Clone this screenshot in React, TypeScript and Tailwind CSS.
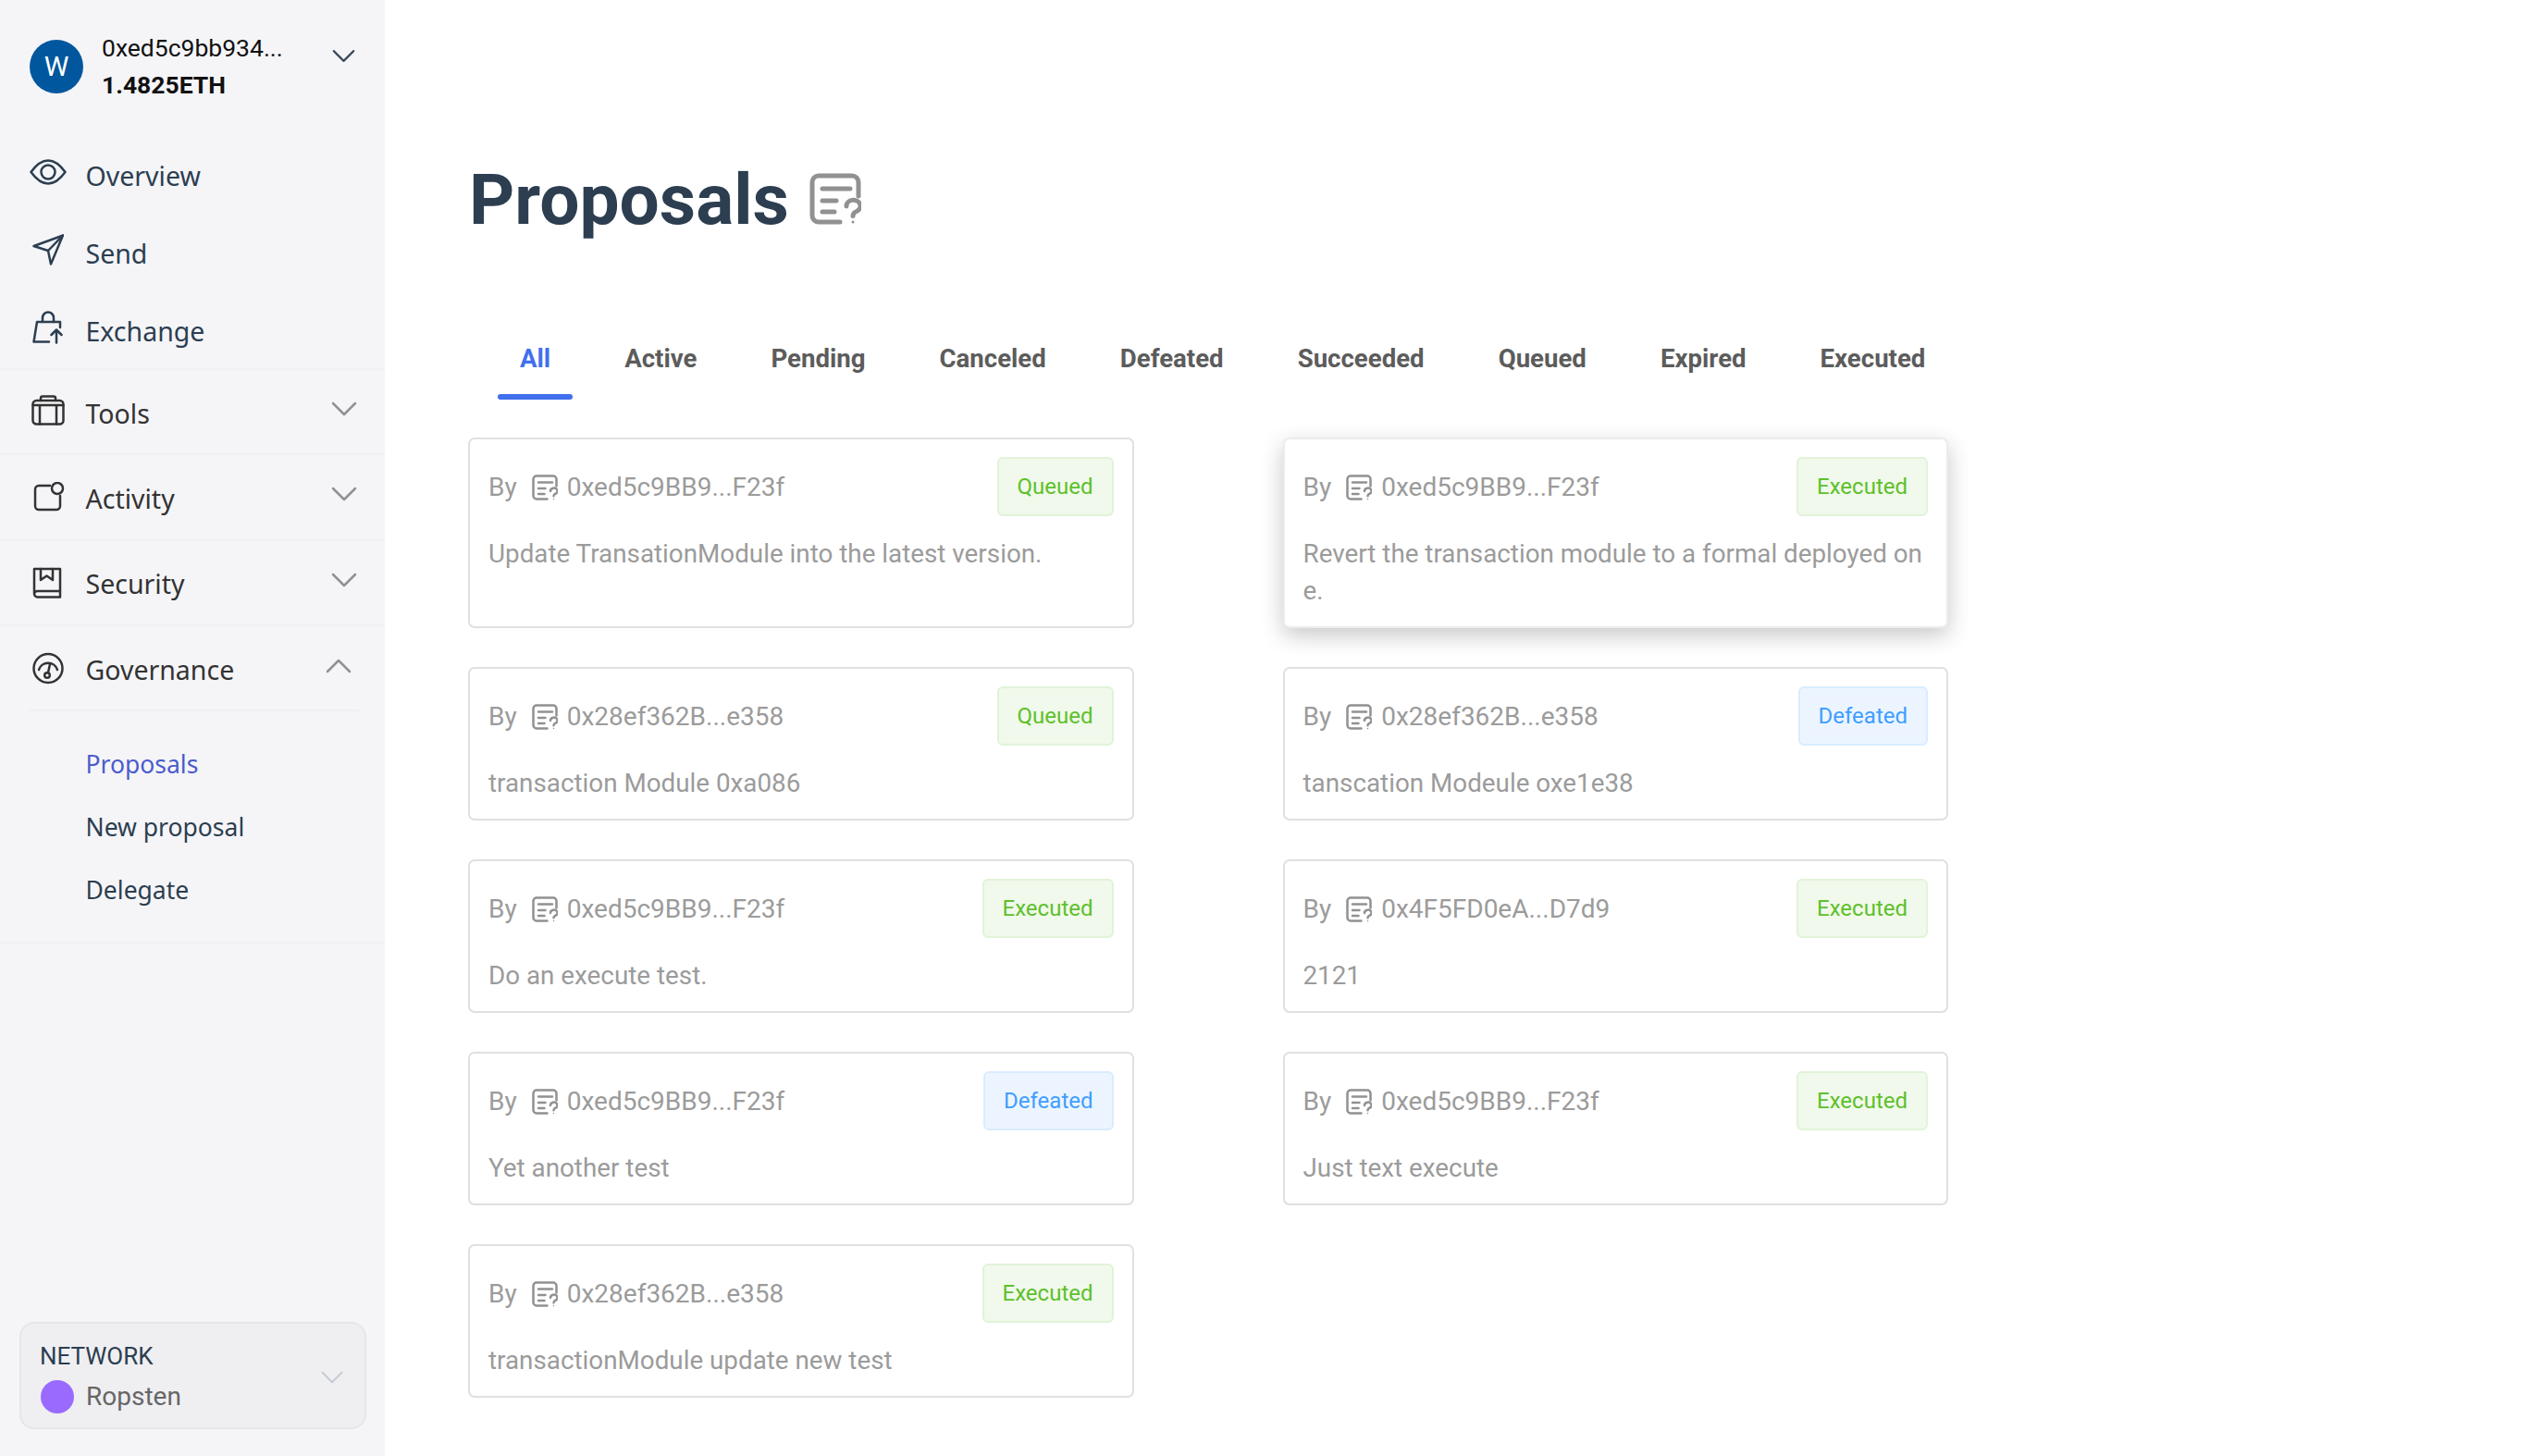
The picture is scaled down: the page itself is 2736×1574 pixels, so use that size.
import React from 'react';
import { ChevronDown, ChevronUp } from 'lucide-react';

const stroke = {
  fill: 'none',
  stroke: 'currentColor',
  strokeWidth: 2.5,
  strokeLinecap: 'round' as const,
  strokeLinejoin: 'round' as const,
};

const EyeIcon = () => (
  <svg width="40" height="28" viewBox="0 0 40 28" {...stroke}>
    <path d="M1.5 14C8 5 14 1.5 20 1.5S32 5 38.5 14C32 23 26 26.5 20 26.5S8 23 1.5 14Z" />
    <circle cx="20" cy="14" r="7.5" />
  </svg>
);

const SendIcon = () => (
  <svg className="ml-[3px]" width="34" height="34" viewBox="0 0 34 34" {...stroke}>
    <path d="M33 1.5L1.5 13L17 18L20 32.5Z" />
    <path d="M33 1.5L17 18" />
  </svg>
);

const BagIcon = () => (
  <svg className="ml-[3px]" width="33" height="36" viewBox="0 0 33 36" {...stroke}>
    <path d="M11 12V7.5a6 6 0 0 1 12 0V12" />
    <path d="M18 33.5H1.5L5 12H30V18" />
    <path d="M26 34.5V21M20.5 26L26 20.5L31.5 26" />
  </svg>
);

const ToolsIcon = () => (
  <svg className="-translate-y-[2px]" width="36" height="33" viewBox="0 0 36 33" {...stroke}>
    <rect x="1.5" y="6" width="33" height="25.5" rx="4" />
    <path d="M10 6V3.500a2 2 0 0 1 2-2H24a2 2 0 0 1 2 2V6" />
    <path d="M9 11V31.500M27 11V31.500M1.500 11H34.500" />
  </svg>
);

const ActivityIcon = () => (
  <svg className="ml-[2px]" width="34" height="32" viewBox="0 0 34 32" {...stroke}>
    <path d="M18 4H6a4 4 0 0 0-4 4V26a4 4 0 0 0 4 4H25a4 4 0 0 0 4-4V15" />
    <circle cx="26" cy="7" r="6" />
  </svg>
);

const BookIcon = () => (
  <svg className="ml-[1px]" width="32" height="34" viewBox="0 0 32 34" {...stroke}>
    <path d="M2 29V2H30V32.500H5.500A3.500 3.500 0 0 1 2 29A3.500 3.500 0 0 1 5.500 26H30" />
    <path d="M9 2V14L15.500 9.500L22 14V2" />
  </svg>
);

const GaugeIcon = () => (
  <svg width="36" height="35" viewBox="0 0 36 35" {...stroke}>
    <circle cx="18" cy="17.500" r="15.500" />
    <path d="M8 19A10.500 10.500 0 0 1 28 19" />
    <circle cx="17" cy="25" r="2.800" />
    <path d="M18 22L20 13" />
  </svg>
);

const DocIcon = ({ size }: { size: number }) => (
  <svg width={size} height={size} viewBox="0 0 56 56" fill="none" stroke="#919191" strokeWidth="5" strokeLinecap="round" strokeLinejoin="round">
    <path d="M33 53H10a7 7 0 0 1-7-7V10a7 7 0 0 1 7-7H46a7 7 0 0 1 7 7V25" />
    <path d="M14 17H44M14 30H29M14 42H27" />
    <path d="M40 36a7.500 6.500 0 1 1 11 5.500q-4 1.500-4 5" />
    <circle cx="47" cy="53" r="1.500" fill="#919191" stroke="none" />
  </svg>
);

const tabs = ['All', 'Active', 'Pending', 'Canceled', 'Defeated', 'Succeeded', 'Queued', 'Expired', 'Executed'];

const proposals = [
  { by: '0xed5c9BB9...F23f', status: 'Queued', text: 'Update TransationModule into the latest version.' },
  { by: '0xed5c9BB9...F23f', status: 'Executed', text: 'Revert the transaction module to a formal deployed one.', hovered: true },
  { by: '0x28ef362B...e358', status: 'Queued', text: 'transaction Module 0xa086' },
  { by: '0x28ef362B...e358', status: 'Defeated', text: 'tanscation Modeule oxe1e38' },
  { by: '0xed5c9BB9...F23f', status: 'Executed', text: 'Do an execute test.' },
  { by: '0x4F5FD0eA...D7d9', status: 'Executed', text: '2121' },
  { by: '0xed5c9BB9...F23f', status: 'Defeated', text: 'Yet another test' },
  { by: '0xed5c9BB9...F23f', status: 'Executed', text: 'Just text execute' },
  { by: '0x28ef362B...e358', status: 'Executed', text: 'transactionModule update new test' },
];

const NavRow = ({ icon, label }: { icon: React.ReactNode; label: string }) => (
  <div className="flex h-[84px] items-center pl-[32px] text-[#2c3e50]">
    <span className="flex w-[60.500px] -translate-y-[2px] items-center">{icon}</span>
    <span className="translate-y-[2px] text-[28.500px]">{label}</span>
  </div>
);

const NavGroup = ({ icon, label, height }: { icon: React.ReactNode; label: string; height: string }) => (
  <div className={`flex items-center border-t-2 border-[#f0f0f2] pr-[20px] pl-[32px] text-[#333333] ${height}`}>
    <span className="flex w-[60.500px] items-center pl-[2px]">{icon}</span>
    <span className="flex-1 translate-y-[2px] text-[28.500px]">{label}</span>
    <ChevronDown className="-my-4 -translate-y-[3px] text-[#919191]" size={48} strokeWidth={1.25} />
  </div>
);

const ProposalCard = ({ by, status, text, hovered }: (typeof proposals)[0]) => (
  <div className={`rounded-[7px] border-2 bg-white px-[20px] pt-[19px] pb-[18px] ${hovered ? 'border-[#ececec] shadow-[0_8px_24px_rgba(0,0,0,0.22)]' : 'border-[#e0e0e0]'}`}>
    <div className="flex h-[64px] items-center justify-between">
      <div className="flex translate-y-[1px] items-center text-[28px] text-[#9b9b9b]">
        <span>By</span>
        <span className="mr-[10px] ml-[16px] flex"><DocIcon size={28} /></span>
        <span>{by}</span>
      </div>
      {status === 'Defeated' ? (
        <span className="flex h-[64px] items-center rounded-[6px] border-2 border-[#d9ecff] bg-[#ecf5ff] px-[20px] text-[24px] text-[#409eff]">{status}</span>
      ) : (
        <span className="flex h-[64px] items-center rounded-[6px] border-2 border-[#e1f3d8] bg-[#f0f9eb] px-[20px] text-[24px] text-[#5ec02a]">{status}</span>
      )}
    </div>
    <p className="mt-[21px] text-[27.800px] leading-[40px] break-all text-[#9b9b9b]">{text}</p>
  </div>
);

export default function App() {
  return (
    <div className="flex h-[1574px] overflow-hidden bg-white font-['Roboto',sans-serif]">
      <aside className="flex h-full w-[416px] shrink-0 flex-col bg-[#f5f5f8]">
        <div className="flex h-[146px] items-center pr-[23px] pb-[3px] pl-[32px]">
          <span className="flex h-[58px] w-[58px] items-center justify-center rounded-full bg-[#00579e] text-[30px] text-white">W</span>
          <div className="ml-[20px] flex-1 text-[26.500px] leading-[40px] text-[#111111]">
            <div>0xed5c9bb934...</div>
            <div className="font-bold">1.4825ETH</div>
          </div>
          <ChevronDown className="-translate-y-[11px] text-[#3a4a5a]" size={43} strokeWidth={1.2} />
        </div>
        <div className="font-['Noto_Sans',sans-serif]">
          <div>
            <NavRow icon={<EyeIcon />} label="Overview" />
            <NavRow icon={<SendIcon />} label="Send" />
            <NavRow icon={<BagIcon />} label="Exchange" />
          </div>
          <NavGroup icon={<ToolsIcon />} label="Tools" height="h-[92px]" />
          <NavGroup icon={<ActivityIcon />} label="Activity" height="h-[92.500px]" />
          <NavGroup icon={<BookIcon />} label="Security" height="h-[92.500px]" />
          <div className="border-y-2 border-[#f0f0f2] pb-[22px]">
            <div className="mr-[28px] ml-[32px] flex h-[92px] items-center border-b-2 border-[#f0f0f2] text-[#333333]">
              <span className="flex w-[60.500px] items-center pl-[2px]"><GaugeIcon /></span>
              <span className="flex-1 translate-y-[2px] text-[28.500px]">Governance</span>
              <ChevronUp className="-my-4 -mr-[2px] -translate-y-[2px] text-[#919191]" size={48} strokeWidth={1.25} />
            </div>
            <ul className="mt-[23px] pl-[92.500px] text-[26.500px] leading-[68px] text-[#2c3e50]">
              <li className="text-[#4b5ccc]">Proposals</li>
              <li>New proposal</li>
              <li>Delegate</li>
            </ul>
          </div>
        </div>
        <div className="mt-auto mr-[20px] mb-[29px] ml-[21px] flex h-[116px] items-center rounded-[16px] border-2 border-[#e6e6e9] bg-[#efeff2] pt-[3px] pr-[14px] pl-[20px]">
          <div className="flex-1">
            <div className="text-[26px] leading-[36px] text-[#2c3e50]">NETWORK</div>
            <div className="mt-[6px] flex items-center text-[28px] leading-[40px] text-[#666666]">
              <span className="mr-[13px] ml-[1px] h-[36px] w-[36px] rounded-full bg-[#9a6aff]" />
              Ropsten
            </div>
          </div>
          <ChevronDown className="-my-2 text-[#c5cad3]" size={42} strokeWidth={1.1} />
        </div>
      </aside>

      <main className="flex-1 pl-[91px]">
        <div className="mt-[170px] flex h-[90px] items-center">
          <h1 className="translate-y-[1px] text-[76.600px] leading-[90px] font-bold text-[#2c3e50]">Proposals</h1>
          <span className="ml-[22px] flex"><DocIcon size={56} /></span>
        </div>
        <div className="mt-[108px] ml-[15px] flex">
          {tabs.map(tab => (
            <div key={tab} className="flex flex-col">
              <span className={`px-[40px] text-center text-[27.600px] leading-[40px] font-bold ${tab === 'All' ? 'text-[#4170ee]' : 'text-[#5c5c5c]'}`}>{tab}</span>
              <span className={`mx-[16px] mt-[18px] h-[6px] rounded-full ${tab === 'All' ? 'bg-[#4170ee]' : 'bg-transparent'}`} />
            </div>
          ))}
        </div>
        <div className="mt-[41px] -ml-[1px] grid w-[1600px] grid-cols-2 gap-x-[161px] gap-y-[42px]">
          {proposals.map((p, i) => (
            <ProposalCard key={i} {...p} />
          ))}
        </div>
      </main>
    </div>
  );
}
